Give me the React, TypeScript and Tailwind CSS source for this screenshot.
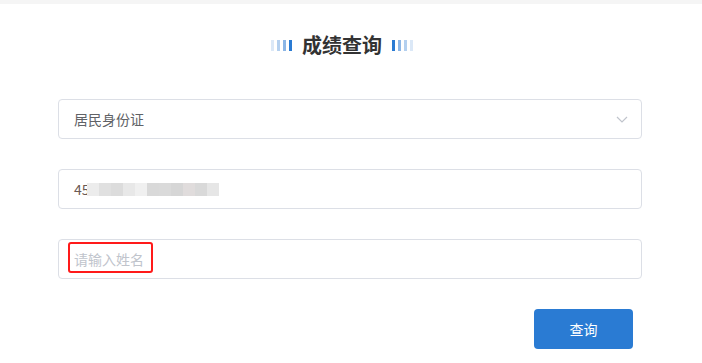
import * as React from "react";

const FONT = "font-['Microsoft_YaHei','Noto_Sans_CJK_SC',sans-serif]";

function Bars({ reverse = false }: { reverse?: boolean }) {
  const colors = ["bg-[#dbe8f7]", "bg-[#b4d0ef]", "bg-[#8cb6e6]", "bg-[#2a7bd3]"];
  const list = reverse ? [...colors].reverse() : colors;
  return (
    <div className="flex items-center gap-[3px]">
      {list.map((c, i) => (
        <span key={i} className={`block w-[3px] h-[11px] ${c}`} />
      ))}
    </div>
  );
}

function Mosaic() {
  const cells = [
    "bg-[#ececec]", "bg-[#e0e0e0]", "bg-[#dcdcdc]", "bg-[#e8e8e8]", "bg-[#f0f0f0]",
    "bg-[#d9d9d9]", "bg-[#dadada]", "bg-[#d6d6d6]", "bg-[#e0dcdc]", "bg-[#d9d9d9]", "bg-[#e6e6e6]",
  ];
  return (
    <div className="flex h-[13px] -ml-[3px] mt-[1px] blur-[0.6px]">
      {cells.map((c, i) => (
        <span key={i} className={`block w-[12px] h-full ${c}`} />
      ))}
    </div>
  );
}

export default function App() {
  return (
    <div className={`w-[702px] h-[363px] bg-white overflow-hidden ${FONT}`}>
      <div className="h-[4px] bg-[#f5f5f5]" />

      <div className="flex justify-center items-center gap-[10px] pt-[27px] pr-[18px]">
        <Bars />
        <h1 className="text-[20px] leading-[28px] font-bold text-[#333333]">成绩查询</h1>
        <Bars reverse />
      </div>

      <form className="mt-[40px] pl-[58px] pr-[60px] flex flex-col gap-[30px]">
        <div className="h-[40px] border border-[#dcdfe6] rounded-[4px] flex items-center justify-between pl-[15px] pr-[12px]">
          <span className="text-[14px] text-[#606266]">居民身份证</span>
          <svg width="12" height="7" viewBox="0 0 12 7" fill="none" className="mr-[1px]">
            <path d="M1 1l5 5 5-5" stroke="#c0c4cc" strokeWidth="1.2" />
          </svg>
        </div>

        <div className="h-[40px] border border-[#dcdfe6] rounded-[4px] flex items-center pl-[15px]">
          <span className="text-[14px] text-[#6b5a55]">45</span>
          <Mosaic />
        </div>

        <div className="relative h-[40px] border border-[#dcdfe6] rounded-[4px] flex items-center pl-[15px]">
          <span className="text-[14px] text-[#c0c4cc]">请输入姓名</span>
          <span className="absolute left-[9px] top-[2px] w-[85px] h-[31px] border-2 border-[#ff1a1a] rounded-[3px]" />
        </div>

        <div className="flex justify-end pr-[9px]">
          <button
            type="button"
            className="w-[99px] h-[40px] rounded-[4px] bg-[#2a7bd3] text-white text-[14px]"
          >
            查询
          </button>
        </div>
      </form>
    </div>
  );
}
